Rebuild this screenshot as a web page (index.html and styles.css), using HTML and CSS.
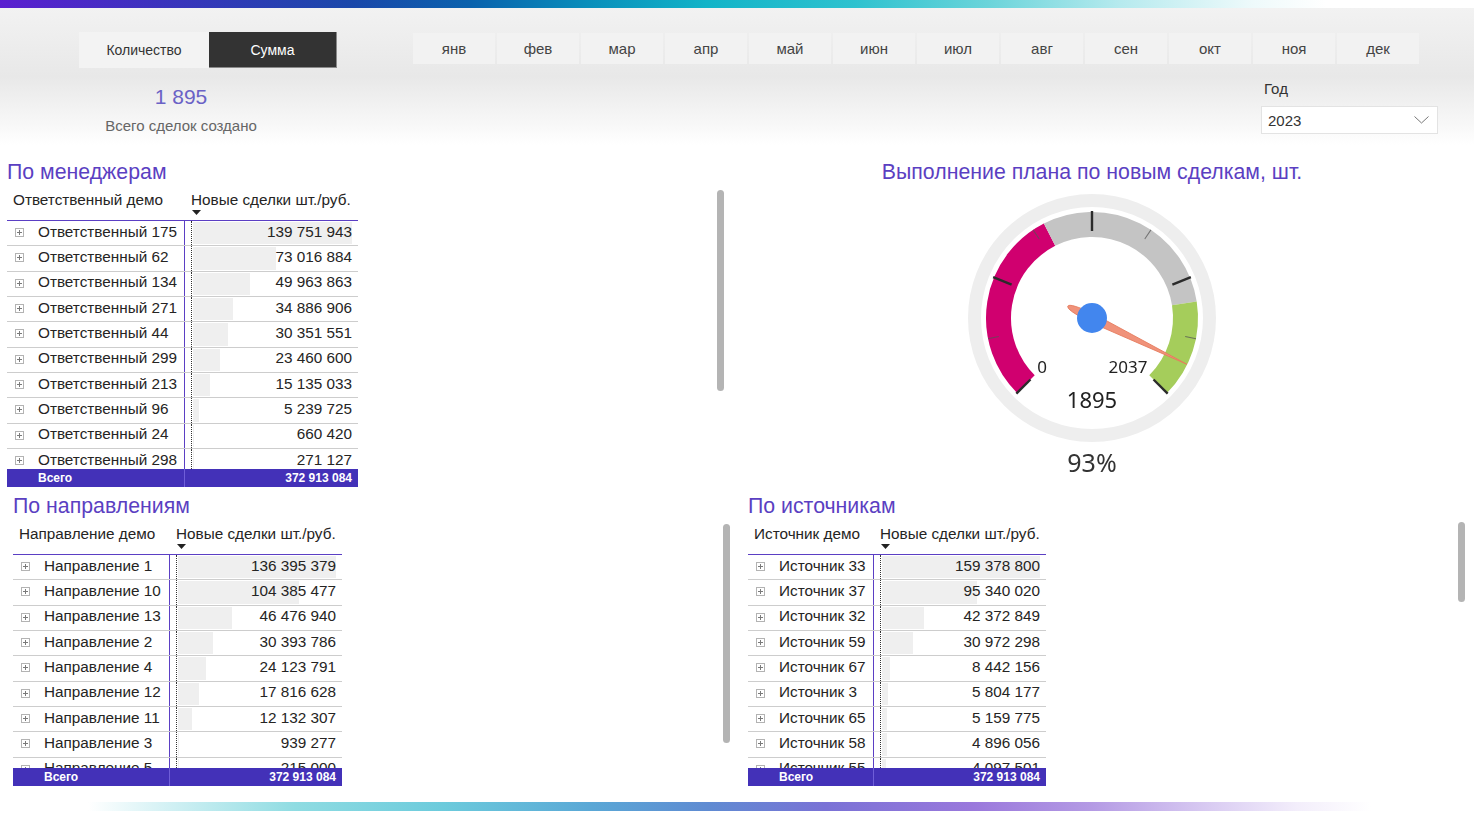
FILE: index.html
```html
<!DOCTYPE html>
<html lang="ru">
<head>
<meta charset="utf-8">
<title>Новые сделки</title>
<link rel="stylesheet" href="styles.css">
</head>
<body>
<div class="topbar"></div>
<header class="header">
  <div class="hleft">
    <div class="toggles">
      <div class="tg tg-off">Количество</div>
      <div class="tg tg-on">Сумма</div>
    </div>
    <div class="kpi">
      <div class="kpi-num">1 895</div>
      <div class="kpi-lbl">Всего сделок создано</div>
    </div>
  </div>
  <div class="hright">
    <div class="months">
      <div class="mo">янв</div><div class="mo">фев</div><div class="mo">мар</div><div class="mo">апр</div>
      <div class="mo">май</div><div class="mo">июн</div><div class="mo">июл</div><div class="mo">авг</div>
      <div class="mo">сен</div><div class="mo">окт</div><div class="mo">ноя</div><div class="mo">дек</div>
    </div>
    <div class="year">
      <div class="year-lbl">Год</div>
      <div class="dd">
        <span>2023</span>
        <svg class="chev" width="15" height="8" viewBox="0 0 15 8"><path d="M0.5 0.5 L7.5 7 L14.5 0.5" fill="none" stroke="#777" stroke-width="1"/></svg>
      </div>
    </div>
  </div>
</header>

<main class="main">
  <section class="row row-top">
    <div class="vis v-mgr">
      <div class="vbody">
        <div class="vtitle">По менеджерам</div>
        <div class="tbl t1">
          <div class="thead">
            <div class="th th1">Ответственный демо</div>
            <div class="th th2">Новые сделки шт./руб.<svg class="sort" width="9" height="6" viewBox="0 0 9 6"><polygon points="0,0 9,0 4.5,5" fill="#222"/></svg></div>
          </div>
          <div class="tbody">
            <div class="tr"><div class="td1"><i class="exp"></i>Ответственный 175</div><div class="td2"><div class="vc"><div class="bar" style="width:100%"></div><div class="num">139 751 943</div></div></div></div>
            <div class="tr"><div class="td1"><i class="exp"></i>Ответственный 62</div><div class="td2"><div class="vc"><div class="bar" style="width:52.25%"></div><div class="num">73 016 884</div></div></div></div>
            <div class="tr"><div class="td1"><i class="exp"></i>Ответственный 134</div><div class="td2"><div class="vc"><div class="bar" style="width:35.75%"></div><div class="num">49 963 863</div></div></div></div>
            <div class="tr"><div class="td1"><i class="exp"></i>Ответственный 271</div><div class="td2"><div class="vc"><div class="bar" style="width:24.96%"></div><div class="num">34 886 906</div></div></div></div>
            <div class="tr"><div class="td1"><i class="exp"></i>Ответственный 44</div><div class="td2"><div class="vc"><div class="bar" style="width:21.72%"></div><div class="num">30 351 551</div></div></div></div>
            <div class="tr"><div class="td1"><i class="exp"></i>Ответственный 299</div><div class="td2"><div class="vc"><div class="bar" style="width:16.79%"></div><div class="num">23 460 600</div></div></div></div>
            <div class="tr"><div class="td1"><i class="exp"></i>Ответственный 213</div><div class="td2"><div class="vc"><div class="bar" style="width:10.83%"></div><div class="num">15 135 033</div></div></div></div>
            <div class="tr"><div class="td1"><i class="exp"></i>Ответственный 96</div><div class="td2"><div class="vc"><div class="bar" style="width:3.75%"></div><div class="num">5 239 725</div></div></div></div>
            <div class="tr"><div class="td1"><i class="exp"></i>Ответственный 24</div><div class="td2"><div class="vc"><div class="bar" style="width:0.47%"></div><div class="num">660 420</div></div></div></div>
            <div class="tr"><div class="td1"><i class="exp"></i>Ответственный 298</div><div class="td2"><div class="vc"><div class="bar" style="width:0.19%"></div><div class="num">271 127</div></div></div></div>
          </div>
          <div class="tf"><div class="tf1">Всего</div><div class="tf2">372 913 084</div></div>
        </div>
      </div>
      <div class="sb sb1"></div>
    </div>

    <div class="vis v-plan">
      <div class="vtitle center">Выполнение плана по новым сделкам, шт.</div>
      <svg class="gauge" width="300" height="300" viewBox="0 0 300 300">
        <circle cx="150" cy="133" r="117.5" fill="none" stroke="#eeeeee" stroke-width="13"/>
        <path d="M83.89 199.11 A93.5 93.5 0 0 1 107.55 49.69" fill="none" stroke="#d0006f" stroke-width="25"/>
        <path d="M107.55 49.69 A93.5 93.5 0 0 1 242.35 118.37" fill="none" stroke="#c4c4c4" stroke-width="25"/>
        <path d="M242.35 118.37 A93.5 93.5 0 0 1 216.11 199.11" fill="none" stroke="#a5cd5b" stroke-width="25"/>
        <g stroke="#2b2b2b" stroke-width="2.4">
          <line x1="150" y1="26" x2="150" y2="46" transform="rotate(-135 150 133)"/>
          <line x1="150" y1="26" x2="150" y2="46" transform="rotate(-67.5 150 133)"/>
          <line x1="150" y1="26" x2="150" y2="46"/>
          <line x1="150" y1="26" x2="150" y2="46" transform="rotate(67.5 150 133)"/>
          <line x1="150" y1="26" x2="150" y2="46" transform="rotate(135 150 133)"/>
        </g>
        <g stroke="#555" stroke-width="1" opacity="0.75">
          <line x1="150" y1="27" x2="150" y2="38" transform="rotate(-101.25 150 133)"/>
          <line x1="150" y1="27" x2="150" y2="38" transform="rotate(-33.75 150 133)"/>
          <line x1="150" y1="27" x2="150" y2="38" transform="rotate(33.75 150 133)"/>
          <line x1="150" y1="27" x2="150" y2="38" transform="rotate(101.25 150 133)"/>
        </g>
        <path d="M150 27.5 L154.5 133 Q154 160 150 160 Q146 160 145.5 133 Z" fill="#f0927a" stroke="#e57a5c" stroke-width="0.8" transform="rotate(116 150 133)"/>
        <circle cx="150" cy="133" r="15" fill="#4286ee"/>
        <text x="100" y="188" class="g-lbl">0</text>
        <text x="186" y="188" class="g-lbl">2037</text>
        <text x="150" y="223" class="g-val">1895</text>
        <text x="150" y="287" class="g-pct">93%</text>
      </svg>
    </div>
  </section>

  <section class="row row-bottom">
    <div class="vis v-dir">
      <div class="vbody">
        <div class="vtitle">По направлениям</div>
        <div class="tbl t2">
          <div class="thead">
            <div class="th th1">Направление демо</div>
            <div class="th th2">Новые сделки шт./руб.<svg class="sort" width="9" height="6" viewBox="0 0 9 6"><polygon points="0,0 9,0 4.5,5" fill="#222"/></svg></div>
          </div>
          <div class="tbody">
            <div class="tr"><div class="td1"><i class="exp"></i>Направление 1</div><div class="td2"><div class="vc"><div class="bar" style="width:100%"></div><div class="num">136 395 379</div></div></div></div>
            <div class="tr"><div class="td1"><i class="exp"></i>Направление 10</div><div class="td2"><div class="vc"><div class="bar" style="width:76.53%"></div><div class="num">104 385 477</div></div></div></div>
            <div class="tr"><div class="td1"><i class="exp"></i>Направление 13</div><div class="td2"><div class="vc"><div class="bar" style="width:34.08%"></div><div class="num">46 476 940</div></div></div></div>
            <div class="tr"><div class="td1"><i class="exp"></i>Направление 2</div><div class="td2"><div class="vc"><div class="bar" style="width:22.28%"></div><div class="num">30 393 786</div></div></div></div>
            <div class="tr"><div class="td1"><i class="exp"></i>Направление 4</div><div class="td2"><div class="vc"><div class="bar" style="width:17.69%"></div><div class="num">24 123 791</div></div></div></div>
            <div class="tr"><div class="td1"><i class="exp"></i>Направление 12</div><div class="td2"><div class="vc"><div class="bar" style="width:13.06%"></div><div class="num">17 816 628</div></div></div></div>
            <div class="tr"><div class="td1"><i class="exp"></i>Направление 11</div><div class="td2"><div class="vc"><div class="bar" style="width:8.9%"></div><div class="num">12 132 307</div></div></div></div>
            <div class="tr"><div class="td1"><i class="exp"></i>Направление 3</div><div class="td2"><div class="vc"><div class="bar" style="width:0.69%"></div><div class="num">939 277</div></div></div></div>
            <div class="tr"><div class="td1"><i class="exp"></i>Направление 5</div><div class="td2"><div class="vc"><div class="bar" style="width:0.16%"></div><div class="num">215 000</div></div></div></div>
          </div>
          <div class="tf"><div class="tf1">Всего</div><div class="tf2">372 913 084</div></div>
        </div>
      </div>
      <div class="sb sb2"></div>
    </div>

    <div class="vis v-src">
      <div class="vbody">
        <div class="vtitle">По источникам</div>
        <div class="tbl t3">
          <div class="thead">
            <div class="th th1">Источник демо</div>
            <div class="th th2">Новые сделки шт./руб.<svg class="sort" width="9" height="6" viewBox="0 0 9 6"><polygon points="0,0 9,0 4.5,5" fill="#222"/></svg></div>
          </div>
          <div class="tbody">
            <div class="tr"><div class="td1"><i class="exp"></i>Источник 33</div><div class="td2"><div class="vc"><div class="bar" style="width:100%"></div><div class="num">159 378 800</div></div></div></div>
            <div class="tr"><div class="td1"><i class="exp"></i>Источник 37</div><div class="td2"><div class="vc"><div class="bar" style="width:59.82%"></div><div class="num">95 340 020</div></div></div></div>
            <div class="tr"><div class="td1"><i class="exp"></i>Источник 32</div><div class="td2"><div class="vc"><div class="bar" style="width:26.59%"></div><div class="num">42 372 849</div></div></div></div>
            <div class="tr"><div class="td1"><i class="exp"></i>Источник 59</div><div class="td2"><div class="vc"><div class="bar" style="width:19.43%"></div><div class="num">30 972 298</div></div></div></div>
            <div class="tr"><div class="td1"><i class="exp"></i>Источник 67</div><div class="td2"><div class="vc"><div class="bar" style="width:5.3%"></div><div class="num">8 442 156</div></div></div></div>
            <div class="tr"><div class="td1"><i class="exp"></i>Источник 3</div><div class="td2"><div class="vc"><div class="bar" style="width:3.64%"></div><div class="num">5 804 177</div></div></div></div>
            <div class="tr"><div class="td1"><i class="exp"></i>Источник 65</div><div class="td2"><div class="vc"><div class="bar" style="width:3.24%"></div><div class="num">5 159 775</div></div></div></div>
            <div class="tr"><div class="td1"><i class="exp"></i>Источник 58</div><div class="td2"><div class="vc"><div class="bar" style="width:3.07%"></div><div class="num">4 896 056</div></div></div></div>
            <div class="tr"><div class="td1"><i class="exp"></i>Источник 55</div><div class="td2"><div class="vc"><div class="bar" style="width:2.57%"></div><div class="num">4 097 501</div></div></div></div>
          </div>
          <div class="tf"><div class="tf1">Всего</div><div class="tf2">372 913 084</div></div>
        </div>
      </div>
      <div class="sb sb3"></div>
    </div>
  </section>
  <div class="bottombar"></div>
</main>
</body>
</html>
```

FILE: styles.css
```css
html, body {
  margin: 0;
  padding: 0;
}
body {
  width: 1474px;
  height: 827px;
  overflow: hidden;
  background: #ffffff;
  font-family: "Liberation Sans", Arial, sans-serif;
  color: #252423;
}

.topbar {
  height: 8px;
  background: linear-gradient(90deg, #5b1fd0 0%, #3b33bd 11%, #1a48aa 24%, #0a62ad 32%, #0a8fbb 40%, #12b4c8 48%, #2ec2cf 58%, #6ad4da 67%, #b6eaee 76%, #eefafb 85%, #ffffff 90%);
}

.header {
  height: 137px;
  display: flex;
  background: linear-gradient(180deg, #f2f2f2 0%, #ececec 30%, #e8e8e8 50%, #f1f1f1 70%, #f9f9f9 88%, #ffffff 100%);
}
.hleft {
  width: 413px;
  flex: none;
}
.toggles {
  display: flex;
  margin: 24px 0 0 79px;
}
.tg {
  height: 36px;
  display: flex;
  align-items: center;
  justify-content: center;
  font-size: 14px;
  box-sizing: border-box;
}
.tg-off {
  width: 130px;
  background: #f3f3f3;
  color: #333;
}
.tg-on {
  width: 128px;
  background: #333333;
  color: #ffffff;
  border-right: 1px solid #8a8a8a;
  border-bottom: 1px solid #8a8a8a;
}
.kpi {
  width: 362px;
  text-align: center;
  margin-top: 17px;
}
.kpi-num {
  font-size: 21px;
  line-height: 24px;
  color: #6a62c6;
}
.kpi-lbl {
  margin-top: 8px;
  font-size: 15px;
  line-height: 18px;
  color: #666666;
}

.hright {
  flex: 1;
  display: flex;
  flex-direction: column;
}
.months {
  display: flex;
  gap: 2px;
  margin-top: 25px;
}
.mo {
  width: 82px;
  height: 31px;
  background: #f2f2f2;
  color: #444;
  font-size: 15px;
  display: flex;
  align-items: center;
  justify-content: center;
}
.year {
  align-self: flex-end;
  margin-right: 36px;
  margin-top: 16px;
  width: 177px;
}
.year-lbl {
  font-size: 15px;
  line-height: 18px;
  color: #333;
  padding-left: 3px;
}
.dd {
  margin-top: 8px;
  height: 28px;
  box-sizing: border-box;
  border: 1px solid #e3e3e3;
  background: #ffffff;
  display: flex;
  align-items: center;
  justify-content: space-between;
  padding: 0 8px 0 6px;
  font-size: 15px;
  color: #333;
}
.chev {
  display: block;
}

.main {
  padding-top: 15px;
}
.row {
  display: flex;
}
.row-top {
  height: 334px;
}
.row-bottom {
  height: 308px;
}
.vis {
  display: flex;
  justify-content: space-between;
  flex: none;
}
.v-mgr {
  margin-left: 7px;
  width: 718px;
}
.v-plan {
  margin-left: 5px;
  width: 724px;
  flex-direction: column;
  justify-content: flex-start;
}
.v-dir {
  margin-left: 13px;
  width: 717px;
}
.v-src {
  margin-left: 18px;
  width: 718px;
}

.vtitle {
  font-size: 21.3px;
  line-height: 24px;
  height: 24px;
  color: #5b3fc2;
  white-space: nowrap;
}
.vtitle.center {
  text-align: center;
}

.sb {
  flex: none;
  width: 7px;
  border-radius: 4px;
  background: #b4b4b4;
  margin-top: 30px;
}
.sb1 {
  height: 201px;
  margin-right: 1px;
}
.sb2 {
  height: 219px;
  margin-right: 0;
}
.sb3 {
  height: 80px;
  margin-right: 1px;
  margin-top: 28px;
}

/* tables */
.t1 { width: 351px; --c1: 178px; }
.t2 { width: 329px; --c1: 157px; }
.t3 { width: 298px; --c1: 126px; }

.thead {
  display: flex;
  height: 37px;
  box-sizing: border-box;
  border-bottom: 1px solid #5b3fc4;
  font-size: 15.3px;
}
.th {
  padding-top: 7px;
  line-height: 18px;
  white-space: nowrap;
}
.th1 {
  width: var(--c1);
  padding-left: 6px;
  box-sizing: border-box;
}
.th2 {
  padding-left: 6px;
}
.sort {
  display: block;
  margin: 1px 0 0 1px;
}

.tbody {
  overflow: hidden;
}
.t1 .tbody { height: 248px; }
.t2 .tbody, .t3 .tbody { height: 213px; }

.tr {
  display: flex;
  height: 25.33px;
  box-sizing: border-box;
  border-bottom: 1px solid #cdcdcd;
  font-size: 15.3px;
  flex: none;
}
.td1 {
  width: var(--c1);
  flex: none;
  box-sizing: border-box;
  border-right: 1px solid #5b3fc4;
  display: flex;
  align-items: center;
  padding-left: 8px;
  padding-bottom: 3px;
  white-space: nowrap;
  overflow: hidden;
}
.exp {
  display: block;
  flex: none;
  width: 9px;
  height: 9px;
  box-sizing: border-box;
  border: 1px solid #b3b3b3;
  margin: 2px 14px 0 0;
  background:
    linear-gradient(#7a7a7a, #7a7a7a) center / 5px 1px no-repeat,
    linear-gradient(#7a7a7a, #7a7a7a) center / 1px 5px no-repeat;
}
.td2 {
  flex: 1;
  display: flex;
  padding-left: 6px;
}
.vc {
  flex: 1;
  display: grid;
  border-left: 1px dotted #333;
  padding: 1px 6px 1px 1px;
}
.bar {
  grid-area: 1 / 1;
  background: #efefef;
}
.num {
  grid-area: 1 / 1;
  justify-self: end;
  align-self: center;
  padding-bottom: 3px;
  white-space: nowrap;
}

.tf {
  display: flex;
  height: 18px;
  background: #4331b8;
  color: #ffffff;
  font-weight: bold;
  font-size: 12px;
  line-height: 18px;
}
.tf1 {
  width: var(--c1);
  flex: none;
  box-sizing: border-box;
  border-right: 1px solid #6f5ed8;
  padding-left: 31px;
}
.tf2 {
  flex: 1;
  text-align: right;
  padding-right: 6px;
}

/* gauge */
.gauge {
  display: block;
  margin: 1px auto 0;
}
.g-lbl {
  font-family: "Noto Sans", "Liberation Sans", sans-serif;
  font-size: 17px;
  fill: #222;
  text-anchor: middle;
}
.g-val {
  font-family: "Noto Sans", "Liberation Sans", sans-serif;
  font-size: 22px;
  fill: #222;
  text-anchor: middle;
}
.g-pct {
  font-family: "Noto Sans", "Liberation Sans", sans-serif;
  font-size: 25px;
  fill: #333;
  text-anchor: middle;
}

.bottombar {
  height: 9px;
  background: linear-gradient(90deg, #ffffff 0%, #ffffff 6%, #d6f2f5 11%, #8fdce2 20%, #6ccbdc 30%, #5aa8d6 40%, #5f8bd2 48%, #7a72d6 56%, #9a78dc 66%, #b49ae4 74%, #d9cbf2 82%, #f3eefb 88%, #ffffff 93%);
}
```
